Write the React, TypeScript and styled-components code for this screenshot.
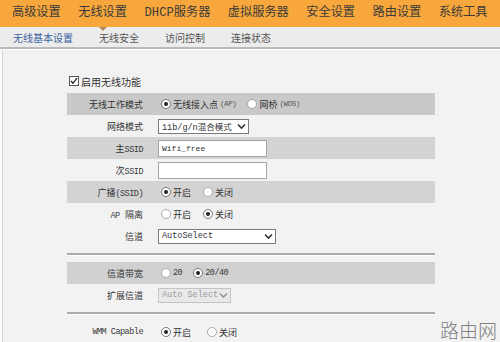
import React from "react";
import styled, { createGlobalStyle } from "styled-components";

const Global = createGlobalStyle`
  html, body { margin: 0; padding: 0; background: #fafafa; }
  body { font-family: "Noto Sans CJK SC", "Noto Sans", sans-serif; }
`;

const Page = styled.div`
  position: relative;
  width: 500px;
  height: 342px;
  overflow: hidden;
  background: #fafafa;
  display: flex;
  flex-direction: column;
`;

const TopNav = styled.div`
  height: 27px;
  flex: none;
  background: #f8a73c;
  display: flex;
  align-items: center;
  gap: 17.5px;
  padding-left: 12px;
  font-family: "Liberation Mono", "Noto Sans CJK SC", monospace;
  font-size: 12.2px;
  color: #3b3b3b;
`;

const TopItem = styled.div<{ $active?: boolean }>`
  position: relative;
  white-space: nowrap;
  line-height: 27px;
  &::after {
    content: "";
    display: ${(p) => (p.$active ? "block" : "none")};
    position: absolute;
    left: 50%;
    bottom: -4px;
    margin-left: -4px;
    border-left: 4px solid transparent;
    border-right: 4px solid transparent;
    border-top: 4px solid #b48a5c;
    z-index: 2;
  }
`;

const SubNav = styled.div`
  height: 20px;
  flex: none;
  background: #ececec;
  border-bottom: 2px solid #b9b9b9;
  display: flex;
  align-items: center;
  gap: 26px;
  padding-left: 13px;
  font-size: 10px;
  color: #555;
`;

const SubItem = styled.div<{ $active?: boolean }>`
  color: ${(p) => (p.$active ? "#3a5f9e" : "#555")};
  white-space: nowrap;
`;

const Content = styled.div`
  flex: 1;
  margin-left: 2px;
  border-left: 1px solid #d6d6d6;
  border-top: 1px solid #ffffff;
  background: #f2f2f2;
  padding: 23px 0 0 64px;
  font-family: "Liberation Mono", "Noto Sans CJK SC", monospace;
  font-size: 9px;
  color: #333;
`;

const Form = styled.div`
  width: 368px;
  display: flex;
  flex-direction: column;
`;

const CheckLine = styled.label`
  display: flex;
  align-items: center;
  gap: 2px;
  height: 16px;
  margin: 0 0 4px 2px;
  font-family: "Noto Sans CJK SC", sans-serif;
  font-size: 10px;
`;

const CheckBox = styled.span`
  width: 8px;
  height: 8px;
  border: 1px solid #555;
  background: #fff;
  display: inline-flex;
  align-items: center;
  justify-content: center;
`;

const Row = styled.div<{ $bg?: string }>`
  height: 22px;
  display: grid;
  grid-template-columns: 76px 1fr;
  column-gap: 15px;
  align-items: center;
  background: ${(p) => p.$bg || "transparent"};
`;

const Label = styled.div`
  text-align: right;
  white-space: nowrap;
`;

const Lat = styled.span`
  font-size: 8.5px;
  letter-spacing: -0.5px;
  color: #3a3a3a;
`;

const Options = styled.div<{ $gap?: number }>`
  display: flex;
  align-items: center;
  gap: ${(p) => p.$gap ?? 12}px;
  padding-left: 3px;
`;

const Option = styled.span`
  display: inline-flex;
  align-items: center;
  gap: 2px;
  white-space: nowrap;
`;

const Dot = styled.span<{ $on?: boolean }>`
  width: 8px;
  height: 8px;
  border-radius: 50%;
  border: 1px solid ${(p) => (p.$on ? "#777" : "#aaa")};
  background: #fff;
  display: inline-flex;
  align-items: center;
  justify-content: center;
  &::after {
    content: "";
    width: 4px;
    height: 4px;
    border-radius: 50%;
    background: #222;
    display: ${(p) => (p.$on ? "block" : "none")};
  }
`;

const Small = styled.span`
  font-size: 7.5px;
  letter-spacing: -0.4px;
  color: #555;
`;

const SelectBox = styled.div<{ $w: number; $disabled?: boolean }>`
  width: ${(p) => p.$w}px;
  height: 15px;
  box-sizing: border-box;
  border: 1px solid ${(p) => (p.$disabled ? "#c4c4c4" : "#7a7a7a")};
  background: ${(p) => (p.$disabled ? "#e9e9e9" : "#fff")};
  color: ${(p) => (p.$disabled ? "#9a9a9a" : "#333")};
  display: flex;
  align-items: center;
  justify-content: space-between;
  padding: 0 2px 0 3px;
  font-size: 8.5px;
  white-space: nowrap;
`;

const TextInput = styled.div`
  width: 109px;
  height: 17px;
  box-sizing: border-box;
  border: 1px solid #a5a5a5;
  background: #fff;
  display: flex;
  align-items: center;
  padding-left: 3px;
  font-size: 8px;
  color: #333;
`;

const Separator = styled.div`
  height: 2px;
  background: #ababab;
  border-bottom: 1px solid #fff;
  margin: 6px 0 6px;
`;

const Watermark = styled.div`
  position: absolute;
  right: 3px;
  bottom: 0px;
  font-family: "Noto Sans CJK SC", sans-serif;
  font-weight: 300;
  font-size: 19px;
  line-height: 24px;
  color: #808080;
`;

const Chevron = ({ color = "#333" }: { color?: string }) => (
  <svg width="9" height="7" viewBox="0 0 9 7">
    <path d="M1 1.5 L4.5 5 L8 1.5" fill="none" stroke={color} strokeWidth="1.6" />
  </svg>
);

const Radio = ({ on, children }: { on?: boolean; children: React.ReactNode }) => (
  <Option>
    <Dot $on={on} />
    {children}
  </Option>
);

export default function App() {
  const top = ["高级设置", "无线设置", "DHCP服务器", "虚拟服务器", "安全设置", "路由设置", "系统工具"];
  const sub = ["无线基本设置", "无线安全", "访问控制", "连接状态"];
  return (
    <Page>
      <Global />
      <TopNav>
        {top.map((t, i) => (
          <TopItem key={t} $active={i === 1}>
            {t}
          </TopItem>
        ))}
      </TopNav>
      <SubNav>
        {sub.map((t, i) => (
          <SubItem key={t} $active={i === 0}>
            {t}
          </SubItem>
        ))}
      </SubNav>
      <Content>
        <Form>
          <CheckLine>
            <CheckBox>
              <svg width="8" height="8" viewBox="0 0 8 8">
                <path d="M1 4 L3 6.3 L7 1.2" fill="none" stroke="#222" strokeWidth="1.3" />
              </svg>
            </CheckBox>
            启用无线功能
          </CheckLine>
          <Row $bg="#c9c9c9">
            <Label>无线工作模式</Label>
            <Options $gap={11}>
              <Radio on>
                无线接入点<Small>(AP)</Small>
              </Radio>
              <Radio>
                网桥<Small>(WDS)</Small>
              </Radio>
            </Options>
          </Row>
          <Row>
            <Label>网络模式</Label>
            <SelectBox $w={91}>
              <span>11b/g/n混合模式</span>
              <Chevron />
            </SelectBox>
          </Row>
          <Row $bg="#d3d3d3">
            <Label>
              主<Lat>SSID</Lat>
            </Label>
            <TextInput>Wifi_free</TextInput>
          </Row>
          <Row>
            <Label>
              次<Lat>SSID</Lat>
            </Label>
            <TextInput />
          </Row>
          <Row $bg="#d3d3d3">
            <Label>
              广播<Lat>(SSID)</Lat>
            </Label>
            <Options $gap={12}>
              <Radio on>开启</Radio>
              <Radio>关闭</Radio>
            </Options>
          </Row>
          <Row>
            <Label>
              <Lat>AP</Lat> 隔离
            </Label>
            <Options $gap={12}>
              <Radio>开启</Radio>
              <Radio on>关闭</Radio>
            </Options>
          </Row>
          <Row>
            <Label>信道</Label>
            <SelectBox $w={118}>
              <span>AutoSelect</span>
              <Chevron />
            </SelectBox>
          </Row>
          <Separator />
          <Row $bg="#d0d0d0">
            <Label>信道带宽</Label>
            <Options $gap={11}>
              <Radio>
                <Lat>20</Lat>
              </Radio>
              <Radio on>
                <Lat>20/40</Lat>
              </Radio>
            </Options>
          </Row>
          <Row>
            <Label>扩展信道</Label>
            <SelectBox $w={73} $disabled>
              <span>Auto Select</span>
              <Chevron color="#999" />
            </SelectBox>
          </Row>
          <Separator />
          <Row>
            <Label>
              <Lat>WMM Capable</Lat>
            </Label>
            <Options $gap={16}>
              <Radio on>开启</Radio>
              <Radio>关闭</Radio>
            </Options>
          </Row>
        </Form>
      </Content>
      <Watermark>路由网</Watermark>
    </Page>
  );
}
